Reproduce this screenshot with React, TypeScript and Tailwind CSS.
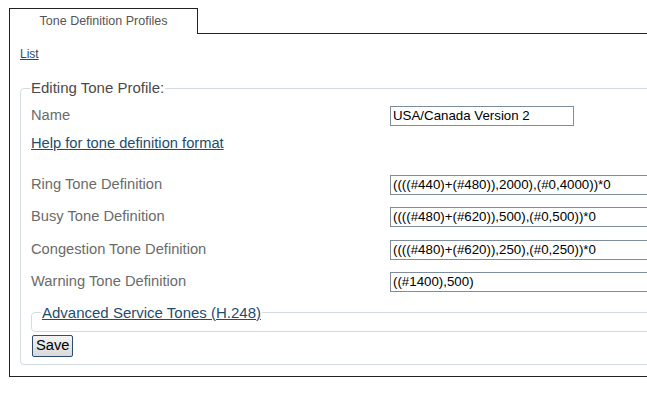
const rows = [
    { label: 'Ring Tone Definition', value: '((((#440)+(#480)),2000),(#0,4000))*0', mt: 'mt-[24px]' },
    { label: 'Busy Tone Definition', value: '((((#480)+(#620)),500),(#0,500))*0', mt: 'mt-[12px]' },
    { label: 'Congestion Tone Definition', value: '((((#480)+(#620)),250),(#0,250))*0', mt: 'mt-[13px]' },
    { label: 'Warning Tone Definition', value: '((#1400),500)', mt: 'mt-[12px]' },
];

function Field({ label, value, width, mt }: { label: string; value: string; width: string; mt: string }) {
    return (
        <div className={`flex items-center h-[20px] ${mt}`}>
            <label className="w-[359px] text-[14.7px] text-[#6b6b6b]">{label}</label>
            <input
                readOnly
                value={value}
                className={`${width} h-[20px] border border-[#7f8d9b] px-[2px] text-[13.3px] text-black bg-white outline-none font-['Liberation_Sans',Arial,sans-serif]`}
            />
        </div>
    );
}

export default function App() {
    return (
        <div className="w-[647px] h-[397px] overflow-hidden bg-white font-['Liberation_Sans',Arial,sans-serif]">
            <div className="flex pt-[8px] pl-[9px] w-[760px]">
                <div className="w-[189px] h-[26px] border-l border-t border-r border-[#222] flex items-center justify-center text-[12.5px] text-[#555]">
                    Tone Definition Profiles
                </div>
                <div className="flex-1 border-b border-[#222]" />
            </div>
            <div className="ml-[9px] w-[760px] border-l border-b border-[#222] pl-[10px] pt-[7px] pb-[11px]">
                <a href="#" className="text-[12px] text-[#1e4d6e] underline">List</a>
                <fieldset className="mt-[12px] border border-[#d2dbe1] rounded-[4px] pl-[10px] pb-[7px] w-[700px]">
                    <legend className="-ml-[1px] px-[1px] text-[15px] text-[#4a4a4a]">Editing Tone Profile:</legend>
                    <Field label="Name" value="USA/Canada Version 2" width="w-[184px]" mt="mt-[6px]" />
                    <div className="mt-[9px] h-[16px] leading-[16px]">
                        <a href="#" className="text-[14.7px] text-[#1e4d6e] underline">Help for tone definition format</a>
                    </div>
                    {rows.map((r) => (
                        <Field key={r.label} label={r.label} value={r.value} width="w-[300px]" mt={r.mt} />
                    ))}
                    <fieldset className="mt-[10px] border border-[#d2dbe1] rounded-[4px] h-[30px] w-[640px]">
                        <legend className="ml-[9px] px-[1px] text-[15px]">
                            <a href="#" className="text-[#1e4d6e] underline">Advanced Service Tones (H.248)</a>
                        </legend>
                    </fieldset>
                    <button className="mt-[3px] ml-[1px] h-[22px] px-[3px] border border-[#2c4d6b] rounded-[2px] bg-gradient-to-b from-[#f4f4f4] to-[#d9d9d9] text-[14.7px] text-black leading-none">
                        Save
                    </button>
                </fieldset>
            </div>
        </div>
    );
}
